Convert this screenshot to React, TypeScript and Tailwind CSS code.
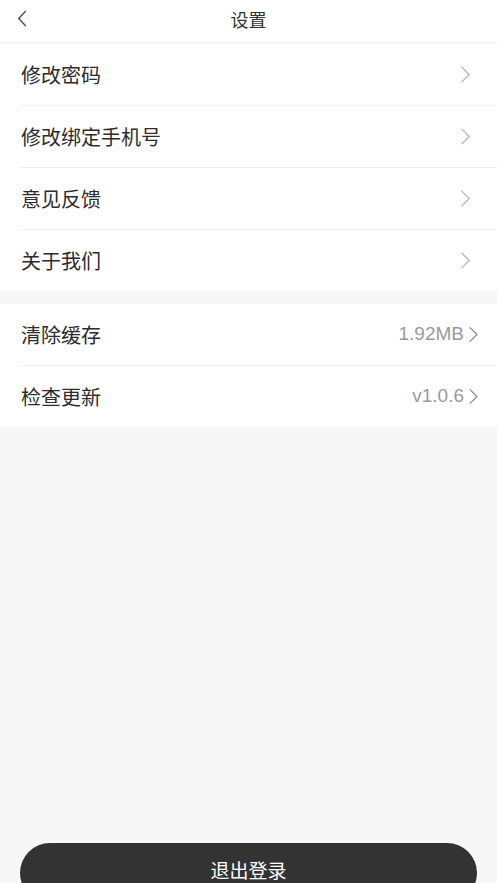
const font = { fontFamily: '"Noto Sans CJK SC", "Noto Sans", sans-serif' };

function Chevron({ className = "" }: { className?: string }) {
  return (
    <svg viewBox="0 0 12 20" className={className} fill="none" stroke="currentColor" strokeWidth={1.4} strokeLinecap="round" strokeLinejoin="round">
      <path d="M2 2 L10 10 L2 18" />
    </svg>
  );
}

const groupOne = ["修改密码", "修改绑定手机号", "意见反馈", "关于我们"];
const groupTwo = [
  { label: "清除缓存", value: "1.92MB" },
  { label: "检查更新", value: "v1.0.6" },
];

export default function App() {
  return (
    <div className="flex h-[883px] w-full flex-col overflow-hidden bg-[#f7f7f7]" style={font}>
      {/* 顶部栏 */}
      <header className="relative flex h-[41px] items-center justify-center bg-white pb-[3px]">
        <button className="absolute left-[16px] top-[10px] text-[#555]">
          <svg viewBox="0 0 12 18" className="h-[17px] w-[12px]" fill="none" stroke="currentColor" strokeWidth={1.6} strokeLinecap="round" strokeLinejoin="round">
            <path d="M9.5 1.5 L2.5 9 L9.5 16.5" />
          </svg>
        </button>
        <h1 className="text-[18px] text-[#333]">设置</h1>
      </header>

      <section className="mt-[3px] bg-white">
        {groupOne.map((label, i) => (
          <div key={label}>
            {i > 0 && <div className="ml-[20px] h-px bg-[#f0f0f0]" />}
            <div className="flex h-[61px] items-center justify-between pl-[21px] pr-[26px]">
              <span className="text-[20px] text-[#2c2c2c]">{label}</span>
              <Chevron className="h-[19px] w-[11px] text-[#b5b5b5]" />
            </div>
          </div>
        ))}
      </section>

      <section className="mt-[13px] bg-white">
        {groupTwo.map((row, i) => (
          <div key={row.label}>
            {i > 0 && <div className="ml-[20px] h-px bg-[#f0f0f0]" />}
            <div className="flex h-[61px] items-center justify-between pl-[21px] pr-[18px]">
              <span className="text-[20px] text-[#2c2c2c]">{row.label}</span>
              <span className="flex items-center gap-[4px] text-[#9a9a9a]">
                <span className="text-[19px]" style={{ fontFamily: '"Liberation Sans", "Noto Sans", sans-serif' }}>{row.value}</span>
                <Chevron className="h-[17px] w-[11px] text-[#8a8a8a]" />
              </span>
            </div>
          </div>
        ))}
      </section>

      <div className="flex-1" />

      <div className="px-[20px]">
        <button className="-mb-[20px] flex h-[60px] w-full items-start justify-center rounded-full bg-[#333333] pt-[13px] text-[19px] text-white">
          退出登录
        </button>
      </div>
    </div>
  );
}
